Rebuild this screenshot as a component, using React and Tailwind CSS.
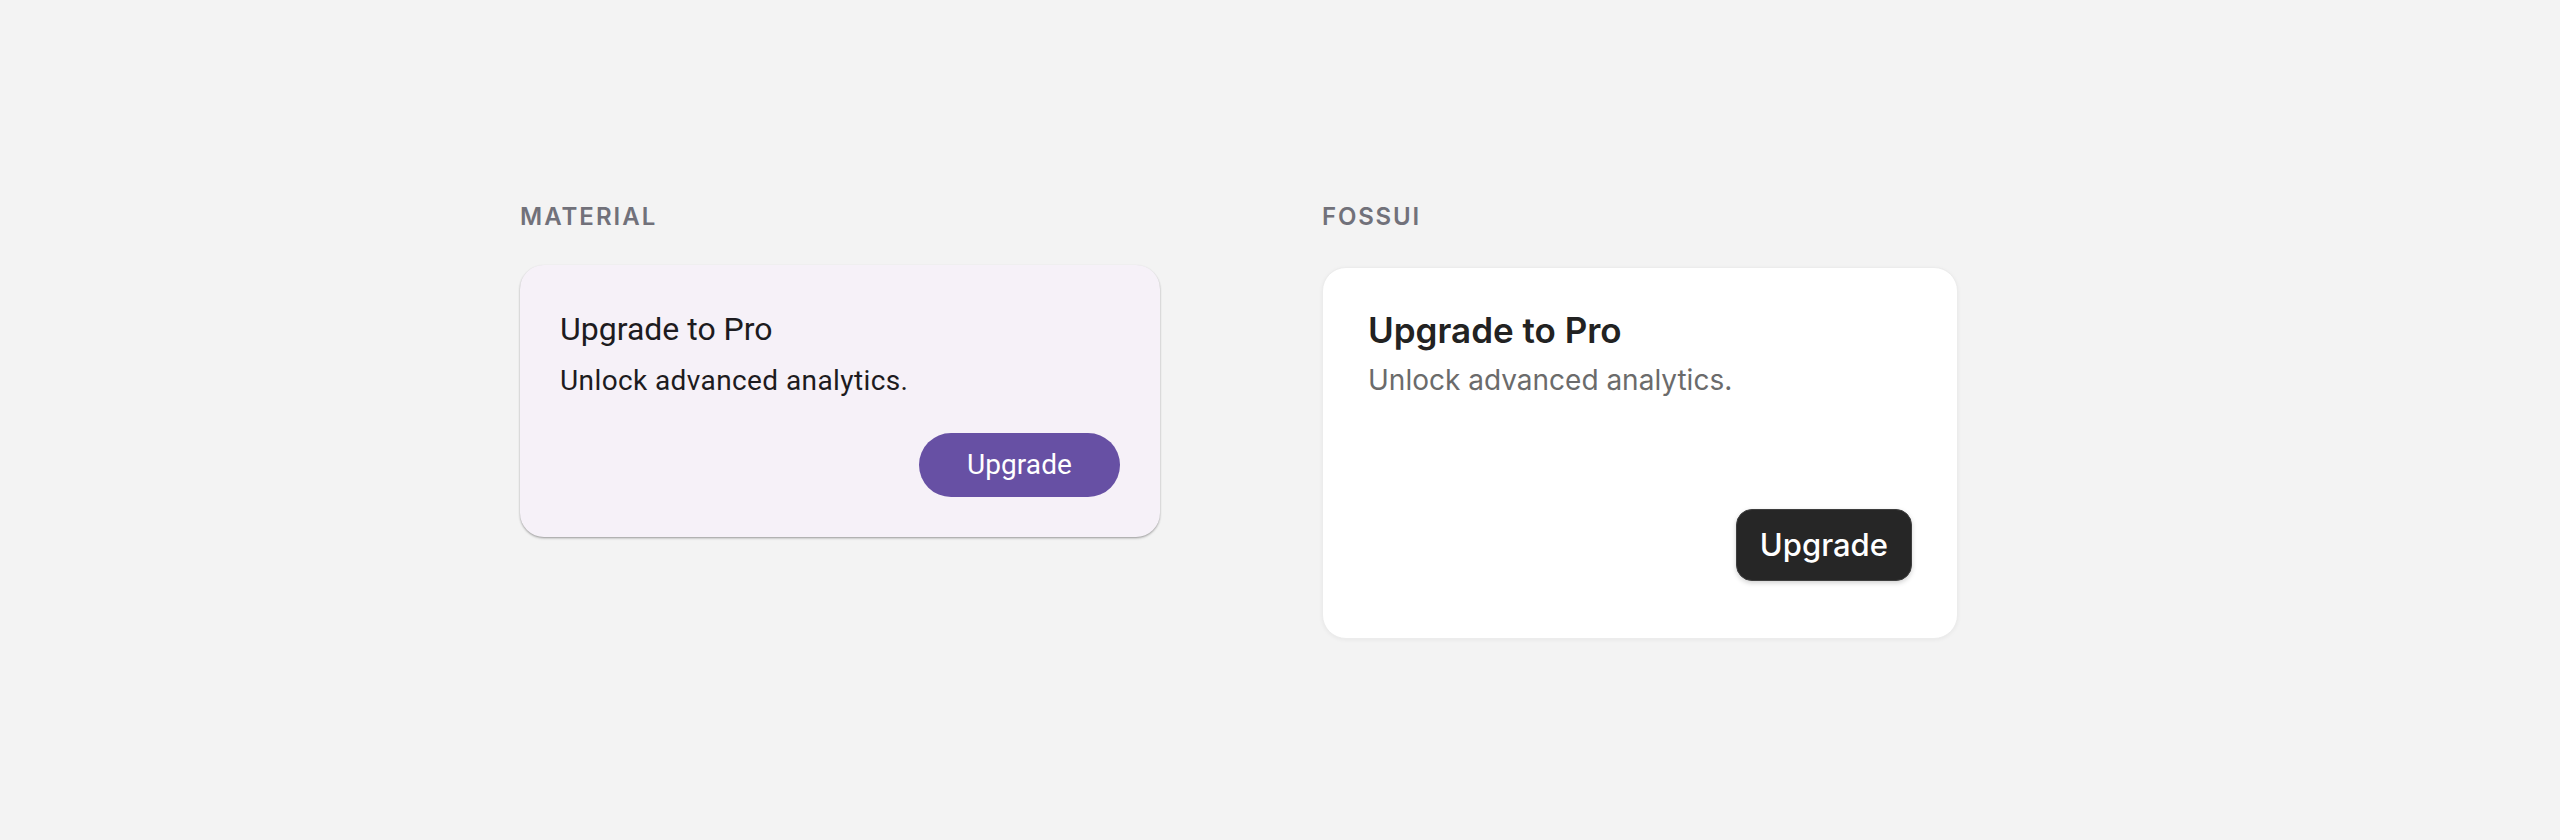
export default function App() {
  return (
    <div className="w-full h-[840px] bg-[#f3f3f3] flex items-start pl-[520px] pt-[201px] gap-[162px]">
      {/* Material column */}
      <div className="w-[640px] flex flex-col">
        <div className="text-[24px] leading-[32px] font-semibold tracking-[2px] text-[#71717a] [font-family:Inter,'Noto_Sans',sans-serif]">
          MATERIAL
        </div>
        <div className="mt-[32px] h-[272px] rounded-[24px] bg-[#f6f1f8] shadow-[0_1px_2px_rgba(0,0,0,0.3),0_2px_3px_rgba(0,0,0,0.07)] px-[40px] pt-[44px] pb-[40px] flex flex-col [font-family:Roboto,'Liberation_Sans',sans-serif]">
          <div className="text-[32px] leading-[40px] text-[#1d1b20]">Upgrade to Pro</div>
          <div className="mt-[12px] text-[28px] leading-[40px] tracking-[0.4px] text-[#1d1b20]">
            Unlock advanced analytics.
          </div>
          <div className="mt-[32px] flex justify-end">
            <button className="h-[64px] px-[48px] rounded-full bg-[#6750a4] text-white text-[28px] font-normal tracking-[0.1px] flex items-center justify-center">
              Upgrade
            </button>
          </div>
        </div>
      </div>

      {/* FossUI column */}
      <div className="w-[636px] flex flex-col">
        <div className="text-[24px] leading-[32px] font-semibold tracking-[1.8px] text-[#71717a] [font-family:Inter,'Noto_Sans',sans-serif]">
          FOSSUI
        </div>
        <div className="mt-[34px] h-[372px] rounded-[24px] bg-white border border-[#ececec] shadow-[0_1px_4px_rgba(0,0,0,0.05)] px-[45px] pt-[40px] flex flex-col [font-family:Inter,'Noto_Sans',sans-serif]">
          <div className="text-[35px] leading-[44px] font-semibold text-[#222222]">Upgrade to Pro</div>
          <div className="mt-[8px] text-[28px] leading-[40px] text-[#6b6b6b]">Unlock advanced analytics.</div>
          <div className="mt-[109px] flex justify-end">
            <button className="h-[72px] px-[23px] rounded-[16px] bg-[#262626] border border-[#3e3e3e] shadow-[0_2px_5px_rgba(0,0,0,0.18)] text-white text-[31px] font-medium flex items-center justify-center">
              Upgrade
            </button>
          </div>
        </div>
      </div>
    </div>
  );
}
